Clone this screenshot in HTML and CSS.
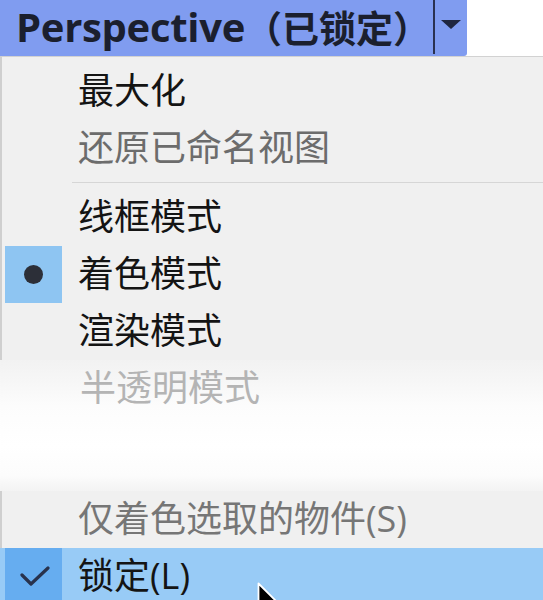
FILE: index.html
```html
<!DOCTYPE html>
<html lang="zh-CN">
<head>
<meta charset="utf-8">
<title>Perspective 菜单</title>
<link rel="stylesheet" href="styles.css">
</head>
<body>
<div class="screen">
  <div class="header">
    <div class="title"><span class="title-latin">Perspective</span><span class="title-cjk">（已锁定）</span></div>
    <div class="divider"></div>
    <div class="drop">
      <svg width="20" height="10" viewBox="0 0 20 10"><polygon points="0,0 20,0 10,9" fill="#1f2640"/></svg>
    </div>
  </div>
  <div class="menu">
    <div class="row"><span class="icon"></span><span class="label">最大化</span></div>
    <div class="row disabled"><span class="icon"></span><span class="label">还原已命名视图</span></div>
    <div class="sep"></div>
    <div class="row"><span class="icon"></span><span class="label">线框模式</span></div>
    <div class="row"><span class="icon icon-on"><span class="dot"></span></span><span class="label">着色模式</span></div>
    <div class="row"><span class="icon"></span><span class="label">渲染模式</span></div>
    <div class="faded">
      <div class="row ghost"><span class="icon"></span><span class="label">半透明模式</span></div>
      <div class="spacer"></div>
    </div>
    <div class="row disabled2"><span class="icon"></span><span class="label">仅着色选取的物件(S)</span></div>
    <div class="row hot"><span class="icon icon-hot">
      <svg width="32" height="24" viewBox="0 0 32 24"><polyline points="4,10 13,19 30,3" fill="none" stroke="#28324d" stroke-width="3.2" stroke-linecap="round" stroke-linejoin="round"/></svg>
    </span><span class="label">锁定(L)</span></div>
  </div>
  <svg class="cursor" width="24" height="36" viewBox="0 0 16 24"><path d="M1,1 L1,18 L5,14 L8,21 L11,20 L8,13 L13,13 Z" fill="#000" stroke="#fff" stroke-width="1.2" stroke-linejoin="round"/></svg>
</div>
</body>
</html>
```

FILE: styles.css
```css
* { box-sizing: border-box; }
html, body { margin: 0; padding: 0; }
body {
  width: 543px;
  height: 600px;
  overflow: hidden;
  background: #ffffff;
  font-family: "Open Sans", "Noto Sans CJK SC", sans-serif;
}
.screen {
  position: relative;
  width: 543px;
  height: 600px;
  overflow: hidden;
}
.header {
  display: flex;
  align-items: stretch;
  width: 467px;
  height: 56px;
  background: #809cf0;
  border-bottom-right-radius: 3px;
}
.title {
  flex: 1;
  display: flex;
  align-items: center;
  padding-left: 16px;
  padding-bottom: 3px;
  color: #1b1f2e;
  font-weight: 700;
  white-space: nowrap;
}
.title-latin {
  font-family: "Open Sans", sans-serif;
  font-size: 40px;
  letter-spacing: -0.3px;
}
.title-cjk {
  font-family: "Noto Sans CJK SC", sans-serif;
  font-size: 37px;
  margin-left: 0;
}
.divider {
  width: 2px;
  height: 54px;
  background: #2a3150;
}
.drop {
  width: 32px;
  display: flex;
  justify-content: center;
  padding-top: 20px;
}
.menu {
  background: #f0f0f0;
  border-top: 1px solid #d2d2d2;
  border-left: 2px solid #cfcfcf;
  padding-top: 5.5px;
  height: 544px;
}
.row {
  display: flex;
  align-items: center;
  height: 57px;
  padding-left: 3px;
  font-family: "Open Sans", "Noto Sans CJK SC", sans-serif;
  font-size: 36px;
  color: #141414;
}
.icon {
  width: 57px;
  height: 57px;
  margin-right: 16px;
  display: flex;
  align-items: center;
  justify-content: center;
}
.label {
  line-height: 57px;
  white-space: nowrap;
  padding-bottom: 2px;
}
.icon-on { background: #8ec5f2; }
.dot {
  width: 19px;
  height: 19px;
  border-radius: 50%;
  background: #2c2f38;
  margin-left: -1px;
}
.disabled { color: #6c6c6c; }
.disabled2 { color: #767676; }
.sep {
  height: 12px;
  display: flex;
  align-items: center;
  padding-left: 70px;
}
.sep::after {
  content: "";
  flex: 1;
  height: 1px;
  background: #d6d6d6;
}
.faded {
  margin-left: -2px;
  padding-left: 2px;
  background: linear-gradient(to bottom, #f2f2f2 0%, #f6f6f6 15%, #fcfcfc 35%, #ffffff 65%, #fcfcfc 88%, #f3f3f3 100%);
  border-left: 2px solid transparent;
}
.ghost { color: #b4b4b4; }
.spacer { height: 74.5px; }
.hot {
  background: #98cbf6;
  margin-left: -2px;
  padding-left: 5px;
}
.icon-hot { background: #66adf0; }
.cursor {
  position: absolute;
  left: 257px;
  top: 582px;
}
```
